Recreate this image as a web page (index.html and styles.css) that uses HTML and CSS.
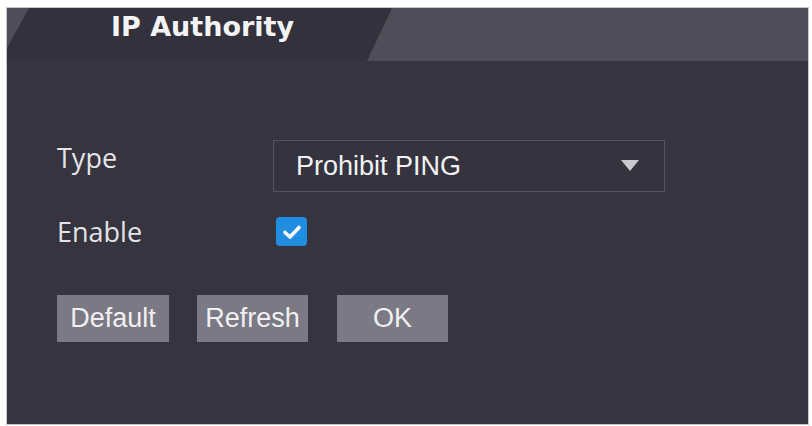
FILE: index.html
```html
<!DOCTYPE html>
<html lang="en">
<head>
    <meta charset="UTF-8">
    <meta name="viewport" content="width=device-width, initial-scale=1.0">
    <title>IP Authority</title>
    <link rel="stylesheet" href="styles.css">
</head>
<body>
    <div class="panel">
        <div class="panel-head">
            <div class="tab">
                <h1>IP Authority</h1>
            </div>
        </div>

        <form class="auth-form" id="authForm">
            <div class="form-row">
                <label for="authType">Type</label>
                <div class="select-wrap">
                    <select id="authType" name="authType">
                        <option>Prohibit PING</option>
                        <option>Allow List</option>
                        <option>Block List</option>
                    </select>
                </div>
            </div>

            <div class="form-row row-enable">
                <label for="enable">Enable</label>
                <label class="check">
                    <input type="checkbox" id="enable" name="enable" checked>
                    <span class="check-box">
                        <svg width="20" height="16" viewBox="0 0 20 16">
                            <path d="M3 8.5 L8 13 L17 3.5" fill="none" stroke="#fff" stroke-width="3.6" stroke-linecap="round" stroke-linejoin="round"/>
                        </svg>
                    </span>
                </label>
            </div>

            <div class="buttons">
                <button type="reset">Default</button>
                <button type="button">Refresh</button>
                <button type="submit">OK</button>
            </div>
        </form>
    </div>
</body>
</html>
```

FILE: styles.css
```css
body {
    margin: 0;
    background: #fff;
    font-family: "Open Sans", Arial, sans-serif;
}

.panel {
    width: 801px;
    height: 416px;
    margin: 7px 0 0 6px;
    background: #36343f;
    border: 1px solid #c6c6ca;
}

.panel-head {
    height: 53px;
    background: #4f4d58;
}

.tab {
    width: 385px;
    height: 53px;
    background: #33313b;
    clip-path: polygon(22px 0, 100% 0, calc(100% - 25px) 100%, 0 100%, 0 40px);
    text-align: center;
}

h1 {
    margin: 0;
    padding: 4px 0 0 6px;
    font-family: "DejaVu Sans", sans-serif;
    font-size: 27px;
    line-height: 30px;
    font-weight: bold;
    color: #f4f4f6;
}

.auth-form {
    padding: 79px 0 0 50px;
}

.form-row {
    display: flex;
    align-items: flex-start;
}

.form-row > label:first-child {
    width: 216px;
    margin-top: 3px;
    font-size: 27px;
    line-height: 30px;
    color: #e4e4e8;
}

.row-enable {
    margin-top: 25px;
}

.row-enable > label:first-child {
    margin-top: 0;
}

.select-wrap {
    position: relative;
    width: 392px;
    height: 52px;
}

.select-wrap select {
    appearance: none;
    -webkit-appearance: none;
    width: 100%;
    height: 100%;
    padding: 0 0 0 22px;
    background: #35333e;
    border: 1px solid #555360;
    border-radius: 0;
    color: #f2f2f4;
    font-family: "Liberation Sans", Arial, sans-serif;
    font-size: 27px;
    outline: none;
}

/* arrow drawn over the select */
.select-wrap::after {
    content: "";
    position: absolute;
    right: 26px;
    top: 20px;
    border-left: 9px solid transparent;
    border-right: 9px solid transparent;
    border-top: 11px solid #cacacf;
    pointer-events: none;
}

.check {
    display: block;
    margin-left: 3px;
    cursor: pointer;
}

.check input {
    display: none;
}

.check-box {
    display: flex;
    align-items: center;
    justify-content: center;
    width: 31px;
    height: 29px;
    border-radius: 4px;
    background: #1f8de0;
}

.check input:not(:checked) + .check-box {
    background: transparent;
    border: 1px solid #777;
}

.check input:not(:checked) + .check-box svg {
    display: none;
}

.buttons {
    display: flex;
    gap: 28px;
    margin-top: 48px;
}

.buttons button {
    width: 111px;
    height: 47px;
    padding: 0;
    background: #7b7983;
    color: #f0f0f2;
    border: none;
    font-family: "Liberation Sans", Arial, sans-serif;
    font-size: 27px;
    cursor: pointer;
}

.buttons button:first-child {
    width: 112px;
}

.buttons button:last-child {
    margin-left: 1px;
}

.buttons button:hover {
    background: #8a8892;
}
```
